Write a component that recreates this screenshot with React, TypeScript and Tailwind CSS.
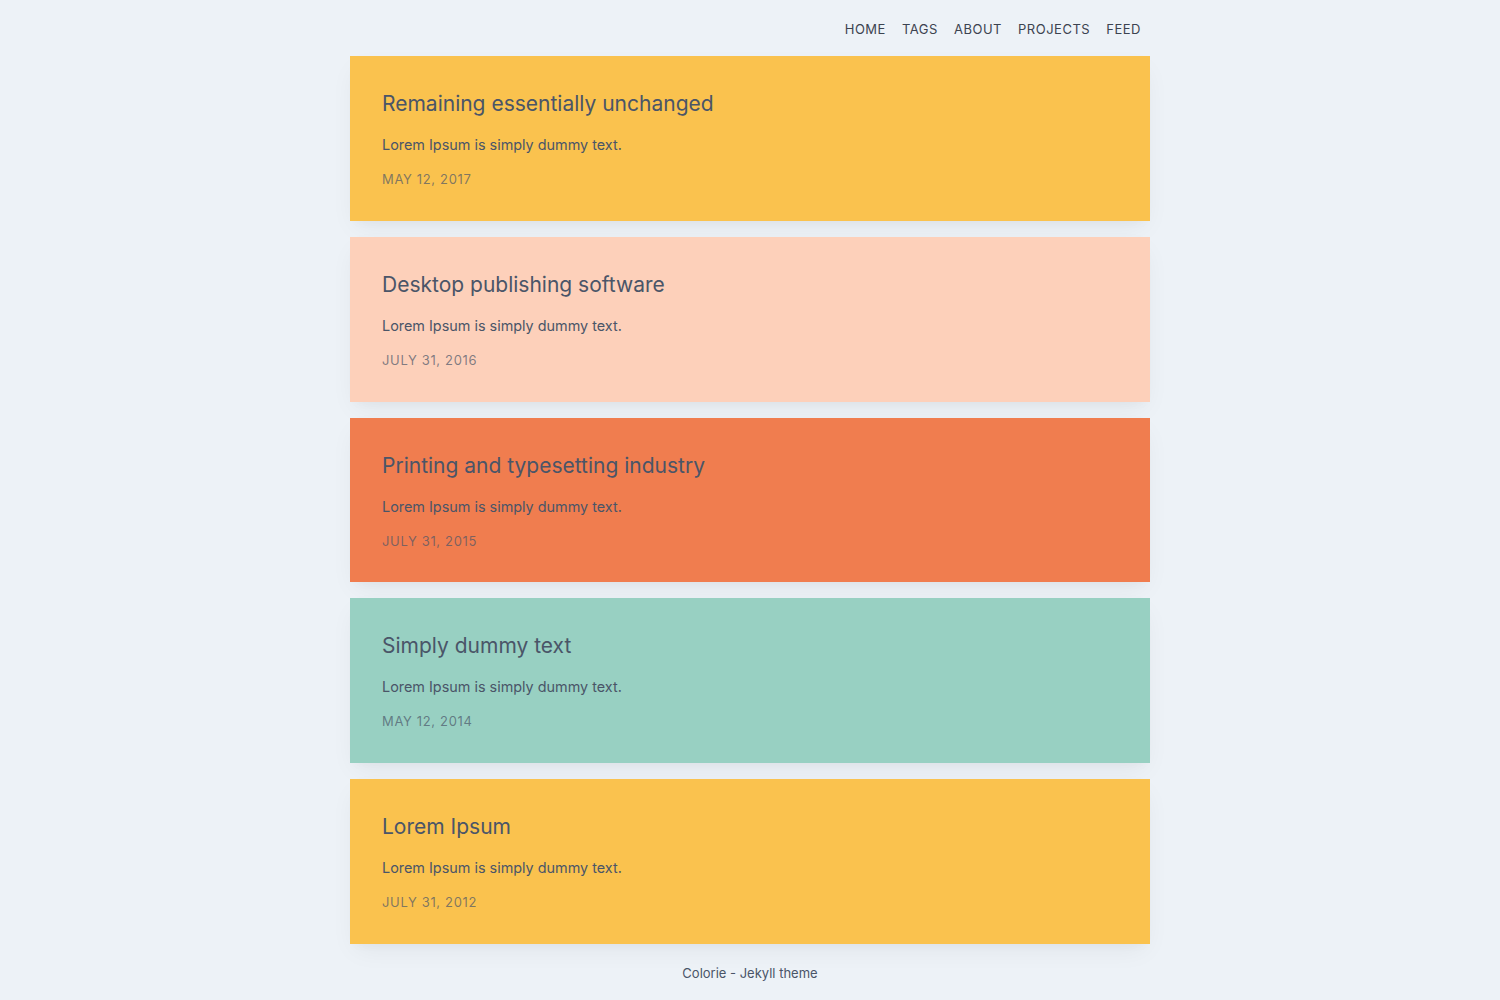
const posts = [
  { title: "Remaining essentially unchanged", date: "May 12, 2017", bg: "bg-[#fac24e]" },
  { title: "Desktop publishing software", date: "July 31, 2016", bg: "bg-[#fdd0ba]" },
  { title: "Printing and typesetting industry", date: "July 31, 2015", bg: "bg-[#f07d4f]" },
  { title: "Simply dummy text", date: "May 12, 2014", bg: "bg-[#98d0c2]" },
  { title: "Lorem Ipsum", date: "July 31, 2012", bg: "bg-[#fac24e]" },
];

const links = ["Home", "Tags", "About", "Projects", "Feed"];

export default function App() {
  return (
    <div className="min-h-screen bg-[#edf2f7] text-[#4a5568]" style={{ fontFamily: "Inter, 'Noto Sans', sans-serif" }}>
      <div className="mx-auto w-[800px]">
        <nav className="flex justify-end gap-4 pr-[9px] pt-[20px] pb-[18px] text-[13px] leading-[18px] uppercase tracking-[0.04em] text-[#3c4350]">
          {links.map((l) => (
            <a key={l} href="#">{l}</a>
          ))}
        </nav>
        <div className="flex flex-col gap-4">
          {posts.map((p) => (
            <article key={p.title} className={`${p.bg} px-8 pt-8 pb-[31.8px] shadow-[0_10px_25px_-5px_rgba(0,0,0,0.06),0_6px_10px_-5px_rgba(0,0,0,0.03)]`}>
              <h2 className="text-[21px] leading-[32px] font-normal">{p.title}</h2>
              <p className="mt-[13px] text-[14.4px] leading-[24px]">Lorem Ipsum is simply dummy text.</p>
              <p className="mt-[12px] text-[13px] leading-[20px] uppercase tracking-[0.05em] text-[#4a5568]/70">{p.date}</p>
            </article>
          ))}
        </div>
        <footer className="pt-[19px] pb-[14px] text-center text-[13px] leading-[20px]">Colorie - Jekyll theme</footer>
      </div>
    </div>
  );
}
